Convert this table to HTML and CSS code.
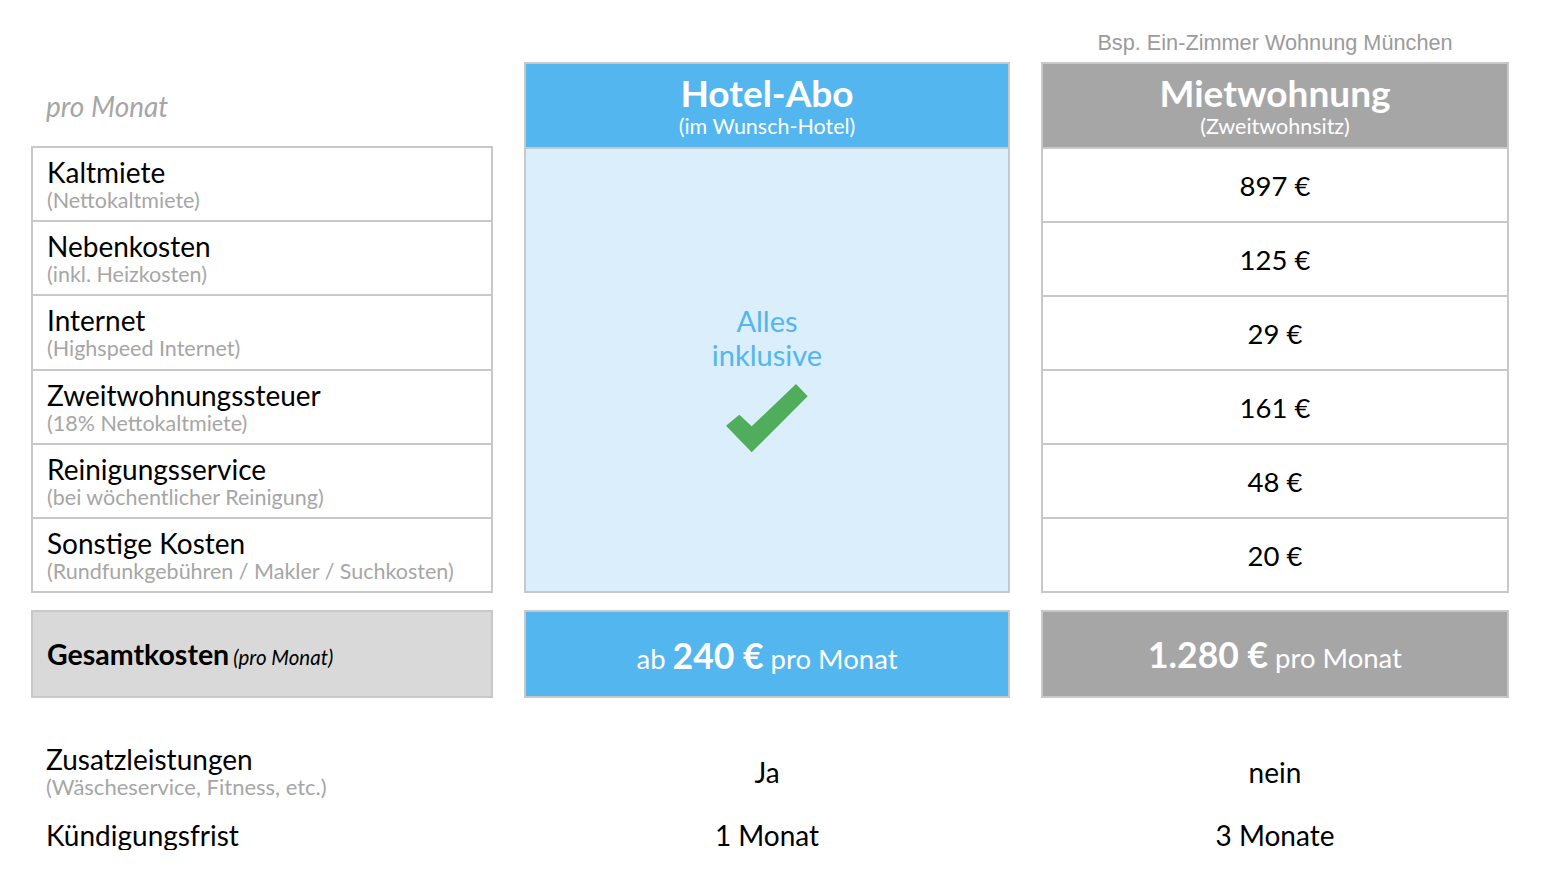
FILE: index.html
```html
<!DOCTYPE html>
<html lang="de">
<head>
<meta charset="utf-8">
<title>Hotel-Abo vs. Mietwohnung</title>
<link rel="stylesheet" href="styles.css">
</head>
<body>
<div class="page">
  <div class="grid">
    <!-- note row -->
    <div class="note-spacer"></div>
    <div class="note-spacer"></div>
    <div class="note">Bsp. Ein-Zimmer Wohnung München</div>

    <!-- headers -->
    <div class="head-label">pro Monat</div>
    <div class="head head-blue">
      <div class="head-title">Hotel-Abo</div>
      <div class="head-sub">(im Wunsch-Hotel)</div>
    </div>
    <div class="head head-gray">
      <div class="head-title">Mietwohnung</div>
      <div class="head-sub">(Zweitwohnsitz)</div>
    </div>

    <!-- table -->
    <div class="table table-left">
      <div class="row"><div class="lbl">Kaltmiete</div><div class="sub">(Nettokaltmiete)</div></div>
      <div class="row"><div class="lbl">Nebenkosten</div><div class="sub">(inkl. Heizkosten)</div></div>
      <div class="row"><div class="lbl">Internet</div><div class="sub">(Highspeed Internet)</div></div>
      <div class="row"><div class="lbl">Zweitwohnungssteuer</div><div class="sub">(18% Nettokaltmiete)</div></div>
      <div class="row"><div class="lbl">Reinigungsservice</div><div class="sub">(bei wöchentlicher Reinigung)</div></div>
      <div class="row"><div class="lbl">Sonstige Kosten</div><div class="sub">(Rundfunkgebühren / Makler / Suchkosten)</div></div>
    </div>
    <div class="table table-mid">
      <div class="incl">Alles<br>inklusive</div>
      <svg class="check" width="82" height="69" viewBox="0 0 82 69" aria-hidden="true">
        <polygon points="0,41.7 13.3,30.7 25.7,42.3 70,0 81.7,12.3 25.7,68.3" fill="#50ad5b"/>
      </svg>
    </div>
    <div class="table table-right">
      <div class="row val">897 €</div>
      <div class="row val">125 €</div>
      <div class="row val">29 €</div>
      <div class="row val">161 €</div>
      <div class="row val">48 €</div>
      <div class="row val">20 €</div>
    </div>

    <!-- totals -->
    <div class="total-cell"><div class="total total-left"><span class="tot-line"><span class="tot-b">Gesamtkosten</span> <span class="tot-i">(pro Monat)</span></span></div></div>
    <div class="total-cell"><div class="total total-blue"><span class="tot-line">ab <span class="tot-big">240 €</span> pro Monat</span></div></div>
    <div class="total-cell"><div class="total total-gray"><span class="tot-line"><span class="tot-big">1.280 €</span> pro Monat</span></div></div>

    <!-- extras -->
    <div class="extra-left"><div class="lbl">Zusatzleistungen</div><div class="sub">(Wäscheservice, Fitness, etc.)</div></div>
    <div class="extra-val">Ja</div>
    <div class="extra-val">nein</div>

    <div class="extra-left2"><div class="lbl">Kündigungsfrist</div></div>
    <div class="extra-val2">1 Monat</div>
    <div class="extra-val2">3 Monate</div>
  </div>
</div>
</body>
</html>
```

FILE: styles.css
```css
* { box-sizing: border-box; }
html, body { margin: 0; padding: 0; background: #fff; }
body { font-family: Lato, "Open Sans", sans-serif; color: #000; }

.page { padding: 30px 0 0 31px; }

.grid {
  display: grid;
  grid-template-columns: 462px 486px 468px;
  grid-template-rows: 32px 85px 446px 105px 107px auto;
  column-gap: 31px;
}

.note {
  font-family: "Liberation Sans", Arial, sans-serif;
  font-size: 21.7px;
  line-height: 26px;
  color: #9b9b9b;
  text-align: center;
}

.head-label {
  font-style: italic;
  font-size: 28px;
  color: #a6a6a6;
  padding: 28px 0 0 15px;
  line-height: 32px;
}

.head {
  border: 2px solid #c8c8c8;
  border-bottom: none;
  color: #fff;
  text-align: center;
  padding-top: 9px;
}
.head-blue { background: #53b6ee; }
.head-gray { background: #a6a6a6; }
.head-title { font-weight: 700; font-size: 37px; line-height: 40px; }
.head-sub { font-size: 21.5px; line-height: 26px; }

.table {
  border: 2px solid #c8c8c8;
  display: flex;
  flex-direction: column;
}
.table-left { margin-top: -1px; }
.table-mid { background: #daeefb; align-items: center; padding-top: 155px; }
.table-right .row { justify-content: center; align-items: center; }

.row {
  flex: 1;
  display: flex;
  flex-direction: column;
  border-top: 2px solid #c8c8c8;
  padding: 9px 0 0 14px;
}
.row:first-child { border-top: none; }
.row.val { padding: 0; font-size: 27.5px; }

.lbl { font-size: 28px; line-height: 30px; }
.sub { font-size: 21.5px; line-height: 26px; color: #a6a6a6; }

.incl {
  color: #53b6ee;
  font-size: 29px;
  line-height: 34px;
  text-align: center;
}
.check { margin-top: 12px; display: block; }

.total-cell { padding-top: 17px; }
.total {
  height: 88px;
  border: 2px solid #c8c8c8;
  display: flex;
  align-items: center;
}
.total-left { background: #d9d9d9; padding: 0 0 0 14px; }
.tot-b { font-weight: 700; font-size: 28.5px; }
.tot-i { font-style: italic; font-size: 20.5px; }
.total-blue, .total-gray {
  justify-content: center;
  color: #fff;
  font-size: 27.5px;
  padding-top: 2px;
}
.total-blue { background: #53b6ee; }
.total-gray { background: #a6a6a6; padding-top: 0; }
.tot-big { font-weight: 700; font-size: 35.5px; }

.extra-left { padding: 46px 0 0 15px; }
.extra-left .sub { font-size: 22px; }
.extra-val { padding-top: 59px; text-align: center; font-size: 28px; line-height: 30px; }
.extra-left2 { padding: 15px 0 0 15px; }
.extra-val2 { padding-top: 15px; text-align: center; font-size: 28px; line-height: 30px; }
```
